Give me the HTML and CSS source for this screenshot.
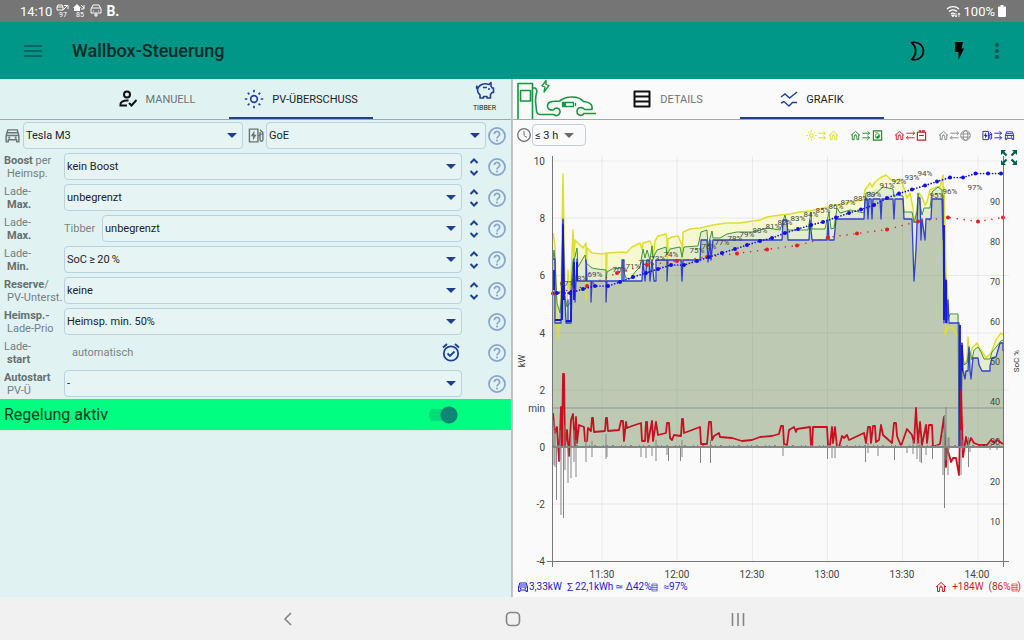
FILE: index.html
```html
<!DOCTYPE html>
<html lang="de">
<head>
<meta charset="utf-8">
<meta name="viewport" content="width=device-width, initial-scale=1">
<title>Wallbox-Steuerung</title>
<link rel="stylesheet" href="styles.css">
</head>
<body>
<svg class="defs" aria-hidden="true">
  <symbol id="house" viewBox="0 0 24 24"><path d="M2 12L12 3l10 9M5 10v11h4v-6a3 3 0 0 1 6 0v6h4V10M9.500 11.500a3 3 0 0 1 5 0" fill="none" stroke="currentColor" stroke-width="2"/></symbol>
  <symbol id="car" viewBox="0 0 24 24"><path d="M3 12l2.500-8h13L21 12M3 12v9h3v-3h12v3h3v-9zM5 8h14" fill="none" stroke="currentColor" stroke-width="2" stroke-linejoin="round"/><circle cx="7.500" cy="15" r="1.500" fill="currentColor"/><circle cx="16.500" cy="15" r="1.500" fill="currentColor"/></symbol>
  <symbol id="pump" viewBox="0 0 24 24"><path d="M2 21V3h12v18zM14 12h3v6a2 2 0 0 0 4 0V8l-4-4M17 7v3h4" fill="none" stroke="currentColor" stroke-width="2"/><path d="M9 5l-5 8h3v6l5-8H9z" fill="currentColor"/></symbol>
  <symbol id="sun" viewBox="0 0 24 24"><circle cx="12" cy="12" r="4" fill="none" stroke="currentColor" stroke-width="2"/><path d="M12 1v3M12 20v3M1 12h3M20 12h3M4.500 4.500l2 2M17.500 17.500l2 2M19.500 4.500l-2 2M6.500 17.500l-2 2" stroke="currentColor" stroke-width="2"/></symbol>
  <symbol id="to" viewBox="0 0 24 24"><path d="M3 7h15M14 3l5 4-5 4M3 17h15M14 13l5 4-5 4" fill="none" stroke="currentColor" stroke-width="2"/></symbol>
  <symbol id="swap" viewBox="0 0 24 24"><path d="M3 7h18M17 3l4 4-4 4M21 17H3M7 13l-4 4 4 4" fill="none" stroke="currentColor" stroke-width="2"/></symbol>
  <symbol id="help" viewBox="0 0 24 24"><g fill="none" stroke="currentColor" stroke-width="2.300"><circle cx="12" cy="12" r="10.700"/><path d="M8.500 9.500a3.500 3.500 0 1 1 5.300 3c-1.300.8-1.800 1.300-1.800 2.700"/></g><circle cx="12" cy="18" r="1.400" fill="currentColor"/></symbol>
  <symbol id="step" viewBox="0 0 10 18"><path d="M1.500 5L5 1.500 8.500 5M1.500 13L5 16.500 8.500 13" fill="none" stroke="currentColor" stroke-width="2"/></symbol>
  <symbol id="cell" viewBox="0 0 8 10"><path d="M1 1h6v8H1zM1 3h6M1 5h6M1 7h6" fill="none" stroke="currentColor" stroke-width=".7"/></symbol>
</svg>

<div class="statusbar">
  <span class="clock">14:10</span>
  <svg width="13" height="14" viewBox="0 0 13 14"><path d="M1 6V3l1-2h4l1 2v3zM1 3h6" fill="none" stroke="currentColor"/><path d="M7 6l4-4M8 1.500h4V5" fill="none" stroke="currentColor"/><text x="3" y="13" class="mini">97</text></svg>
  <svg width="13" height="14" viewBox="0 0 13 14"><path d="M0 4l4-4 4 4H7v3H1V4z" fill="currentColor"/><path d="M8 1l3 3M11 1v4H8" fill="none" stroke="currentColor"/><text x="3" y="13" class="mini">85</text></svg>
  <svg width="12" height="14" viewBox="0 0 12 14"><path d="M1 9V5l2-4h6l2 4v4zM2 4h8M3 7h1M8 7h1M6 9v4M4 11h4" fill="none" stroke="currentColor" stroke-width="1"/></svg>
  <b>B.</b>
  <span class="status-right">
    <svg width="15" height="13" viewBox="0 0 15 13"><path d="M1 4a9 9 0 0 1 12 0M3 6.500a6 6 0 0 1 8 0M5 9a3 3 0 0 1 4 0" fill="none" stroke="currentColor" stroke-width="1.300"/><path d="M7 12l-1.500-2h3zM10 8v4M9 10.500l1 1.500 1-1.500M13 12V8M12 9.500L13 8l1 1.500" fill="currentColor" stroke="currentColor" stroke-width=".7"/></svg>
    100%
    <svg width="8" height="12" viewBox="0 0 8 12"><path d="M2.500 0h3v1.500H7q1 0 1 1V11q0 1-1 1H1q-1 0-1-1V2.500q0-1 1-1h1.500z" fill="currentColor"/></svg>
  </span>
</div>

<header class="appbar">
  <button class="icon-btn menu" aria-label="Menü"><svg width="18" height="12" viewBox="0 0 18 12"><path d="M0 1h18M0 6h18M0 11h18" stroke="currentColor" stroke-width="2"/></svg></button>
  <h1>Wallbox-Steuerung</h1>
  <button class="icon-btn" aria-label="Nachtmodus"><svg width="16" height="20" viewBox="0 0 16 20"><path d="M2.500 1.500C11 0 14.500 6 14.500 10s-3.500 10-12 8.500C8 14 8 6 2.500 1.500z" fill="none" stroke="#000" stroke-width="1.700" stroke-linejoin="round"/></svg></button>
  <button class="icon-btn flash" aria-label="Blitz"><svg width="12" height="20" viewBox="0 0 12 20"><path d="M2 1h8l-1.500 6.500H11L5.500 19v-8H2z" fill="#000"/></svg></button>
  <button class="icon-btn dots" aria-label="Mehr"><svg width="4" height="16" viewBox="0 0 4 16"><circle cx="2" cy="2" r="2"/><circle cx="2" cy="8" r="2"/><circle cx="2" cy="14" r="2"/></svg></button>
</header>

<main class="panes">
  <section class="pane control">
    <div class="tabbar">
      <div class="tabs centered">
        <button class="tab"><svg class="ink" width="18" height="18" viewBox="0 0 18 18"><g fill="none" stroke="currentColor" stroke-width="2"><circle cx="8" cy="4.500" r="3"/><path d="M9.500 10.500H8c-4 0-6.500 2-6.500 3.500V15.500H8M10 13l2.500 2.500 5-5.500"/></g></svg>MANUELL</button>
        <button class="tab active"><svg class="navy" width="20" height="20"><use href="#sun"/></svg>PV-ÜBERSCHUSS</button>
      </div>
      <button class="tibber"><svg class="navy" width="20" height="19" viewBox="0 0 20 19"><path d="M5 4.500c2-1.500 6-2 9-1L16 1.500v3.500l1 2h1.500v4.500H17l-1.500 2v3.500H12V15.500H8.500V17H5v-3c-2-1.500-2.500-3-2.500-5s1-3.500 2.500-4.500zM2.500 8Q1 7 2 4.500" fill="none" stroke="currentColor" stroke-width="1.600" stroke-linejoin="round"/><path d="M8 6.500h4" stroke="currentColor" stroke-width="1.500"/><circle cx="14" cy="8" r="1" fill="currentColor"/></svg>TIBBER</button>
    </div>

    <form class="settings">
      <div class="row">
        <label class="device" for="car-select" aria-label="Fahrzeug"><svg width="17" height="17"><use href="#car"/></svg></label>
        <span class="select"><select id="car-select"><option>Tesla M3</option></select></span>
        <label class="device second" for="box-select" aria-label="Wallbox"><svg width="17" height="17"><use href="#pump"/></svg></label>
        <span class="select"><select id="box-select"><option>GoE</option></select></span>
        <button type="button" class="help" aria-label="Hilfe"><svg width="18" height="18"><use href="#help"/></svg></button>
      </div>
      <div class="row">
        <label class="name" for="boost"><b>Boost</b> per<span>Heimsp.</span></label>
        <span class="select"><select id="boost"><option>kein Boost</option></select></span>
        <button type="button" class="step" aria-label="Boost ändern"><svg width="10" height="18"><use href="#step"/></svg></button>
        <button type="button" class="help" aria-label="Hilfe"><svg width="18" height="18"><use href="#help"/></svg></button>
      </div>
      <div class="row">
        <label class="name" for="max">Lade-<span><b>Max.</b></span></label>
        <span class="select"><select id="max"><option>unbegrenzt</option></select></span>
        <button type="button" class="step" aria-label="Lade-Max. ändern"><svg width="10" height="18"><use href="#step"/></svg></button>
        <button type="button" class="help" aria-label="Hilfe"><svg width="18" height="18"><use href="#help"/></svg></button>
      </div>
      <div class="row">
        <label class="name" for="max-tibber">Lade-<span><b>Max.</b></span></label>
        <label class="prefix" for="max-tibber">Tibber</label>
        <span class="select"><select id="max-tibber"><option>unbegrenzt</option></select></span>
        <button type="button" class="step" aria-label="Tibber-Maximum ändern"><svg width="10" height="18"><use href="#step"/></svg></button>
        <button type="button" class="help" aria-label="Hilfe"><svg width="18" height="18"><use href="#help"/></svg></button>
      </div>
      <div class="row">
        <label class="name" for="min">Lade-<span><b>Min.</b></span></label>
        <span class="select"><select id="min"><option>SoC&thinsp;≥&thinsp;20&thinsp;%</option></select></span>
        <button type="button" class="step" aria-label="Lade-Min. ändern"><svg width="10" height="18"><use href="#step"/></svg></button>
        <button type="button" class="help" aria-label="Hilfe"><svg width="18" height="18"><use href="#help"/></svg></button>
      </div>
      <div class="row">
        <label class="name" for="reserve"><b>Reserve</b>/<span>PV-Unterst.</span></label>
        <span class="select"><select id="reserve"><option>keine</option></select></span>
        <button type="button" class="step" aria-label="Reserve ändern"><svg width="10" height="18"><use href="#step"/></svg></button>
        <button type="button" class="help" aria-label="Hilfe"><svg width="18" height="18"><use href="#help"/></svg></button>
      </div>
      <div class="row">
        <label class="name" for="prio"><b>Heimsp.-</b><span>Lade-Prio</span></label>
        <span class="select"><select id="prio"><option>Heimsp. min. 50%</option></select></span>
        <span class="step"></span>
        <button type="button" class="help" aria-label="Hilfe"><svg width="18" height="18"><use href="#help"/></svg></button>
      </div>
      <div class="row">
        <span class="name">Lade-<span><b>start</b></span></span>
        <span class="auto">automatisch</span>
        <button type="button" class="alarm" aria-label="Ladestart planen"><svg class="navy" width="18" height="19" viewBox="0 0 18 19"><g fill="none" stroke="currentColor" stroke-width="1.800"><circle cx="9" cy="10.500" r="7.200"/><path d="M1 4.500L5 1M17 4.500L13 1M5.500 10.500l2.500 2.500 4.500-4.500"/></g></svg></button>
        <span class="step"></span>
        <button type="button" class="help" aria-label="Hilfe"><svg width="18" height="18"><use href="#help"/></svg></button>
      </div>
      <div class="row">
        <label class="name" for="autostart"><b>Autostart</b><span>PV-Ü</span></label>
        <span class="select"><select id="autostart"><option>-</option></select></span>
        <span class="step"></span>
        <button type="button" class="help" aria-label="Hilfe"><svg width="18" height="18"><use href="#help"/></svg></button>
      </div>
      <div class="active-bar">
        <label for="regelung">Regelung aktiv</label>
        <input id="regelung" class="switch" type="checkbox" checked>
      </div>
    </form>
  </section>

  <section class="pane monitor">
    <div class="tabbar">
      <svg class="brand" width="83" height="40" viewBox="513 79 83 40"><g fill="none" stroke="#16963f" stroke-width="1.600" stroke-linejoin="round" stroke-linecap="round"><path d="M518 118.500V83.500h14.500v35M520.500 90.500h10v10.500h-10zM533 88h2.500l1.500 3-1 4-.5 6 1 10q.5 3.500 4 3.500H554q1 1.500 3 1 3-1 3-4t-3.500-3.500q-2 0-3 2-6 .5-6-4 0-4 5-4.500l7-.5q6-4 11-4 9-.5 13 4.500 8 1 8.500 5v3h-7.500q-1-2-4-2-3.500.5-3.500 4t4 4q2-.5 3-2H596"/><path d="M546 80.500l-4 5.500 3 1-1 5 5-6.500-3-1z" stroke-width="1.300"/><path d="M562.500 102.500h11v4h-11zM575.500 103.500v2" stroke-width="1.300"/></g><path d="M562 102h4v5h-4z" fill="#16963f"/></svg>
      <div class="tabs">
        <button class="tab"><svg class="ink" width="18" height="18" viewBox="0 0 18 18"><path d="M1.500 1.500h15v15h-15zM1.500 6.500h15M1.500 11.500h15" fill="none" stroke="currentColor" stroke-width="2" stroke-linejoin="round"/></svg>DETAILS</button>
        <button class="tab active"><svg class="navy" width="18" height="18" viewBox="0 0 18 18"><path d="M1 7l4-3 4.500 4L17 2M1 13l3-1.500 5 4.500 3.500-3.500H17" fill="none" stroke="currentColor" stroke-width="1.400"/></svg>GRAFIK</button>
      </div>
    </div>

    <div class="toolbar">
      <label class="range-label" for="range" aria-label="Zeitraum"><svg width="14" height="14" viewBox="0 0 14 14"><path d="M7 3v4.500l3 2" fill="none" stroke="currentColor"/><circle cx="7" cy="7" r="6.300" fill="none" stroke="currentColor" stroke-width="1.300"/></svg></label>
      <span class="select range"><select id="range"><option>≤ 3 h</option></select></span>
      <div class="legend">
        <span class="lg yellow"><svg><use href="#sun"/></svg><svg><use href="#to"/></svg><svg><use href="#house"/></svg></span>
        <span class="lg green"><svg><use href="#house"/></svg><svg><use href="#to"/></svg><svg viewBox="0 0 24 24"><path d="M3 2h18v20H3z" fill="none" stroke="currentColor" stroke-width="2.500"/><circle cx="12" cy="13" r="5" fill="none" stroke="currentColor" stroke-width="1.500"/><path d="M8 16l8-6v6l-4 3z" fill="currentColor"/><path d="M6 5.500h7" stroke="currentColor"/></svg></span>
        <span class="lg red"><svg><use href="#house"/></svg><svg><use href="#swap"/></svg><svg viewBox="0 0 24 24"><path d="M3 5h18v17H3zM6 2h4v3M14 5V2h4v3M7 12h10" fill="none" stroke="currentColor" stroke-width="2.500"/></svg></span>
        <span class="lg gray"><svg><use href="#house"/></svg><svg><use href="#swap"/></svg><svg viewBox="0 0 24 24"><g fill="none" stroke="currentColor" stroke-width="2"><circle cx="12" cy="12" r="10.500"/><ellipse cx="12" cy="12" rx="5" ry="10.500"/><path d="M2 8.500h20M2 15.500h20"/></g></svg></span>
        <span class="lg blue"><svg><use href="#pump"/></svg><svg><use href="#to"/></svg><svg><use href="#car"/></svg></span>
      </div>
      <button class="fullscreen" aria-label="Vollbild"><svg width="18" height="17" viewBox="0 0 18 17"><path d="M1 6V1h5L4.300 2.700l3 3-1.600 1.600-3-3zM17 6V1h-5l1.700 1.700-3 3 1.600 1.600 3-3zM1 11v5h5l-1.700-1.700 3-3-1.600-1.600-3 3zM17 11v5h-5l1.700-1.700-3-3 1.600-1.600 3 3z" fill="#00604f"/></svg></button>
    </div>

    <svg class="chart" viewBox="513 150 511 430" role="img" aria-label="Leistung und Ladezustand">
      <path class="fill-pv" d="M553 447V233L555 245 556 290 558 335 561 293 563 174 565 300 567 306 570 290 573 230 575 240 578 243 583 248 586 243 592 253 606 253 623 252 626 253 632 247 640 243 650 241 652 245 658 236 666 234 667 240 672 237 678 236 682 245 683 232 690 229 700 228 713 225 727 223 740 223 753 221 767 217 780 215 800 212 828 207 837 205 850 202 863 200 865 190 870 183 872 187 875 182 880 178 886 175 890 179 895 181 900 179 903 185 907 198 910 193 914 222 917 210 919 193 925 205 930 190 940 187 943 175 944 187 946 323 959 335V447H962V343L963 365 967 360 968 337 970 360 972 348 977 343 981 350 986 358 991 353 996 340 1001 333 1003 335V447z"/>
      <path class="fill-house" d="M553 447V260L555 260 557 303 560 313 563 220 564 293 567 307 570 303 573 260 577 248 578 267 585 255 586 263 592 268 606 270 622 268 626 278 630 279 635 272 640 267 643 249 645 258 647 250 650 260 652 246 653 258 657 250 666 247 680 247 682 257 684 247 698 246 701 232 707 230 708 247 712 231 713 238 720 238 727 234 753 232 767 228 780 230 785 215 788 230 808 230 811 212 812 229 825 229 829 212 831 229 837 208 840 213 850 210 864 213 866 193 883 187 893 189 897 195 903 196 904 212 912 212 914 223 918 193 922 215 924 208 930 208 932 192 938 187 942 190 946 314 959 315V447H962V343L964 365 967 363 969 348 972 360 974 350 978 347 984 359 990 359 992 352 1003 340V447z"/>
      <path class="fill-car" d="M553 447V259H555V323H561L563 219 564 280 566 323H571L574 259 575 302 577 259V281H591V302L592 281H622V260H624V281H642L643 260 645 281 647 260H649L650 281 652 260 654 281H656V260H667V281L668 260H681L682 281 683 260H700L701 240H707L708 262 710 240H782L783 220H787L788 240H809L810 220 812 240H827L828 220 829 240H834L836 219H864L865 199H893L894 219 895 199H903L904 219H912L914 281 918 198H920L921 240 922 219 925 240 926 219H931L932 199H942L944 323H959V447H962V371H968L969 347 970 371 973 358H978L982 371H990L992 358 996 357 1000 343H1003V447z"/>

      <path class="grid" d="M553 161h456M553 218h456M553 275.500h456M553 333h456M553 390h456M553 504h456M602 156v405M677 156v405M752.500 156v405M827.500 156v405M902.500 156v405M978 156v405"/>
      <path class="minline" d="M553 408h450"/>

      <path class="line pv" d="M553 233L555 245 556 290 558 338 561 293 563 174 565 300 567 306 568 270 570 300 573 230 574 260 575 240 578 243 583 248 586 243 586 300 587 248 592 253 603 254 606 253 606 300 607 253 623 252 626 253 632 247 640 243 642 249 643 243 650 241 652 245 653 260 655 241 658 236 666 234 667 240 667 278 668 239 672 237 678 236 682 245 682 275 683 232 690 229 700 228 713 225 727 223 740 223 753 221 760 220 767 217 780 215 790 214 800 212 810 211 828 207 833 205 837 205 850 202 863 200 865 190 870 183 872 187 875 182 880 178 886 175 890 179 895 181 900 179 903 185 907 198 910 193 913 208 914 222 917 210 919 193 922 197 925 205 927 202 930 190 937 187 940 187 943 175 943 250 944 187 946 273 948 300 945 335 947 328 952 327 957 335 960 343 961 395 963 365 967 360 968 337 970 360 972 348 977 343 981 350 986 358 991 353 996 340 1001 333 1003 335"/>
      <path class="line home" d="M553 260L554 250 555 260 557 303 560 313 562 293 563 220 564 293 567 307 570 303 573 260 575 257 577 248 578 267 585 255 586 263 592 268 597 269 606 270 606 280 607 272 612 269 622 268 623 260 624 272 626 278 630 279 635 272 640 267 643 249 645 258 647 250 650 260 652 246 653 258 657 250 666 247 667 255 670 249 680 247 682 257 684 247 698 246 701 232 707 230 708 247 709 242 712 231 713 238 720 238 727 234 737 232 753 232 767 228 780 230 785 215 788 230 808 230 811 212 812 229 825 229 829 212 831 229 834 228 837 208 840 213 850 210 864 213 866 193 870 192 872 197 883 187 893 189 894 197 897 195 903 196 904 212 912 212 914 223 917 212 918 193 922 215 924 208 930 208 932 192 938 187 942 190 943 217 945 273 948 320 950 314 958 314 959 447 961 447 962 343 964 365 967 363 969 348 972 360 974 350 978 347 981 352 984 359 990 359 992 352 997 346 1001 341 1003 340"/>
      <path class="line car" d="M553 259H555V323H561L563 219 564 280 566 323H568V300V323H571L572 290 574 259 575 302 576 281 577 259V281H586V260L587 281H591V302L592 281H606V302L607 281H622V260H624V281H642L643 260 645 281 647 260H649L650 281 652 260 654 281H656V260H667V281L668 260H681L682 281 683 260H700L701 240H707L708 262 710 240 711 260 713 240H782L783 220H787L788 240H809L810 220 812 240H827L828 220 829 240H834L836 219H864L865 199H867L868 219 869 199H871L872 219 873 199H880L881 219 882 199H893L894 219 895 199H903L904 219H912L914 281 916 250 918 198H920L921 240 922 219 925 240 926 219H931L932 199H942L943 240V199L944 323 946 280 947 323 948 300 949 323H959V447H961L962 343 963 371 965 379 966 371H968L969 347 970 371 971 379 973 358H978L979 365 982 371H990V366L992 358 996 357 998 350 1000 343H1003V351"/>
      <path class="line deep" d="M555 320H561M554 270V290M562 320L563 225 564 300M566 321H571V290M574 262V300M577 262V281M944 225V320M946 280V323M960 325V447M962 345V371"/>

      <g class="pct">
        <text x="567" y="283">67%</text><text x="580" y="278">68%</text><text x="595" y="274">69%</text><text x="620" y="269">70%</text><text x="633" y="266">71%</text><text x="646" y="262">72%</text><text x="658" y="258">73%</text><text x="671" y="254">74%</text><text x="697" y="250">75%</text><text x="709" y="246">76%</text><text x="722" y="242">77%</text><text x="735" y="238">78%</text><text x="747" y="234">79%</text><text x="760" y="230">80%</text><text x="773" y="226">81%</text><text x="785" y="222">82%</text><text x="798" y="218">83%</text><text x="811" y="214">84%</text><text x="823" y="210">85%</text><text x="836" y="206">86%</text><text x="848" y="202">87%</text><text x="861" y="198">88%</text><text x="874" y="194">89%</text><text x="887" y="185">91%</text><text x="899" y="181">92%</text><text x="912" y="177">93%</text><text x="925" y="173">94%</text><text x="937" y="195">95%</text><text x="950" y="191">96%</text><text x="975" y="187">97%</text>
      </g>

      <path class="soc-home" d="M553 293.500L587 286 617 273 647 265 677 261 707 257 737 253.500 767 249.500 797 245.500 828 237.500 857 233.500 887 229.500 918 221.500 948 217.500 978 221.500 1003 217.500"/>
      <path class="soc-home big" d="M553 293.500h0M587 286h0M617 273h0M647 265h0M677 261h0M707 257h0M737 253.500h0M767 249.500h0M797 245.500h0M828 237.500h0M857 233.500h0M887 229.500h0M918 221.500h0M948 217.500h0M978 221.500h0M1003 217.500h0"/>
      <path class="soc-car" d="M553 293L570 293 583 289 595 286 608 286 620 282 633 277 646 273 658 269 671 265 684 265 697 261 709 257 722 253 735 249 747 245 760 241 772 238 785 233 798 229 811 225 823 222 836 217.500 849 213 861 209.500 874 205 887 198 899 193.500 912 189.500 925 185.500 937 181.500 950 177.500 963 177.500 975.500 173.500 1003 173.500"/>
      <path class="soc-car big" d="M557 293h0M570 293h0M583 289h0M595 286h0M608 286h0M620 282h0M633 277h0M646 273h0M658 269h0M671 265h0M684 265h0M697 261h0M709 257h0M722 253h0M735 249h0M747 245h0M760 241h0M772 238h0M785 233h0M798 229h0M811 225h0M823 222h0M836 217.500h0M849 213h0M861 209.500h0M874 205h0M887 198h0M899 193.500h0M912 189.500h0M925 185.500h0M937 181.500h0M950 177.500h0M963 177.500h0M975.500 173.500h0M988 173.500h0M1001 173.500h0"/>

      <path class="line battery" d="M553 413L555 433 557 427 559 461 561 407 562 447 563 374 564 374 565 447 567 430 569 456 571 420 573 414 575 446 576 417 577 443 579 425 584 427 585 441 587 441 588 428 591 431 592 418 593 418 594 432 605 431 606 418 607 418 608 431 619 430 621 421 623 421 624 441 626 422 627 428 632 426 641 423 642 441 645 441 646 422 647 422 648 442 652 421 653 441 656 422 658 435 666 433 667 423 669 423 670 438 672 440 674 435 681 436 682 419 683 419 684 433 700 427 701 444 707 444 709 422 711 422 712 440 714 436 719 433 720 437 732 438 742 441 752 440 760 437 772 436 779 434 781 426 783 426 784 444 787 445 789 430 794 427 796 432 797 429 810 427 811 446 812 446 813 427 827 427 828 445 830 445 832 427 833 443 835 427 837 447 839 447 842 436 844 438 847 435 849 440 864 433 866 443 868 427 870 427 871 443 873 426 875 426 876 442 879 440 881 425 883 435 892 443 894 423 896 423 897 436 901 446 907 429 912 435 914 443 916 408 918 443 920 422 922 445 926 425 927 443 929 425 932 425 933 447 940 444 944 417 946 467 947 447 951 462 953 458 956 458 959 475 961 390 963 457 966 437 968 446 971 438 974 443 979 445 987 445 991 440 994 443 997 440 1003 444"/>
      <path class="grid-base" d="M553 447H1003"/>
      <path class="grid-noise" d="M553 446.500H1003"/>
      <path class="grid-power" d="M554 420V465M555 430V467M556.500 447V500M560 430V460M561 447V515M563.500 420V518M565 425V470M568 447V483M571 435V478M574 430V462M576 440V477M586 436V462M592 441V457M606 434V459M607 445V457M641 447V457M646 447V458M652 447V456M656 440V461M667 447V455M668.500 447V461M680.500 447V461M682 440V457M700.500 447V463M710.500 440V463M783 447V456M827.500 447V459M832 447V458M835 447V458M865.500 447V462M868 443V453M878 447V456M894.500 447V460M907 447V453M913 440V454M917 440V459M920 440V462M921.500 447V463M926 447V455M932.500 447V459M943 435V475M944.500 415V508M946 407V460M948 438V475M949 437V450M961 430V475M963 440V450M968.500 437V467M970 447V452M990 445V450M997 445V450"/>

      <path class="axis" d="M552.500 156V567M547 561.500H1009M1003.500 156V567"/>
      <g class="lab end">
        <text x="545" y="165">10</text><text x="545" y="222">8</text><text x="545" y="279">6</text><text x="545" y="337">4</text><text x="545" y="394">2</text><text x="545" y="412">min</text><text x="545" y="451">0</text><text x="545" y="508">-2</text><text x="545" y="565">-4</text>
      </g>
      <g class="lab mid">
        <text x="602" y="578">11:30</text><text x="677" y="578">12:00</text><text x="752" y="578">12:30</text><text x="827" y="578">13:00</text><text x="902" y="578">13:30</text><text x="977" y="578">14:00</text>
      </g>
      <g class="lab soc end">
        <text x="1000" y="205">90</text><text x="1000" y="245">80</text><text x="1000" y="285">70</text><text x="1000" y="325">60</text><text x="1000" y="365">50</text><text x="1000" y="405">40</text><text x="1000" y="445">30</text><text x="1000" y="485">20</text><text x="1000" y="525">10</text>
      </g>
      <text class="unit" transform="translate(525 361) rotate(-90)">kW</text>
      <text class="unit small" transform="translate(1019 361) rotate(-90)">SoC %</text>
    </svg>

    <div class="summary">
      <span class="sum blue"><svg width="12" height="12"><use href="#car"/></svg>3,33kW&nbsp; ∑ 22,1kWh&thinsp;≃ Δ42%<svg width="7" height="9"><use href="#cell"/></svg>&nbsp; ≈97%</span>
      <span class="sum red"><svg width="12" height="12"><use href="#house"/></svg>&nbsp; +184W&nbsp; (86%<svg width="7" height="9"><use href="#cell"/></svg>)</span>
    </div>
  </section>
</main>

<nav class="navbar">
  <button aria-label="Zurück"><svg width="18" height="18" viewBox="0 0 18 18"><path d="M12 3L6 9l6 6" fill="none" stroke="currentColor" stroke-width="1.600"/></svg></button>
  <button aria-label="Start"><svg width="18" height="18" viewBox="0 0 18 18"><rect x="2.500" y="2.500" width="13" height="13" rx="4" fill="none" stroke="currentColor" stroke-width="1.600"/></svg></button>
  <button aria-label="Letzte Apps"><svg width="18" height="18" viewBox="0 0 18 18"><path d="M3.500 3v13M9 3v13M14.500 3v13" stroke="currentColor" stroke-width="1.600"/></svg></button>
</nav>
</body>
</html>
```

FILE: styles.css
```css
* { box-sizing: border-box; }

body {
  margin: 0;
  min-height: 100vh;
  display: flex;
  flex-direction: column;
  font-family: Roboto, "Liberation Sans", sans-serif;
  font-size: 11px;
  color: #202526;
  background: #f1f1f1;
}

button {
  border: 0;
  padding: 0;
  background: none;
  font: inherit;
  color: inherit;
  display: flex;
  align-items: center;
  justify-content: center;
}

svg { display: block; flex: none; }
.defs { position: absolute; width: 0; height: 0; }
.navy { color: #204090; }
.ink { color: #111; }

/* System bars */
.statusbar {
  height: 22px;
  padding: 0 18px 0 20px;
  display: flex;
  align-items: center;
  gap: 4px;
  background: #757575;
  color: #fff;
  font-size: 13px;
}
.statusbar b { font-size: 14px; }
.mini { font-size: 7px; fill: #fff; }
.status-right { margin-left: auto; display: flex; align-items: center; gap: 3px; }

.navbar {
  height: 43px;
  padding-left: 2px;
  display: grid;
  grid-template-columns: repeat(3, 225px);
  justify-content: center;
  color: #858585;
}

.appbar {
  height: 57px;
  padding: 0 9px 0 15px;
  display: flex;
  align-items: center;
  background: #009688;
}
.appbar h1 {
  flex: 1;
  margin: 0 0 0 21px;
  font-size: 18px;
  font-weight: 500;
  color: #0a2b28;
}
.icon-btn { width: 36px; height: 40px; margin-left: 4px; }
.menu { margin-left: 0; color: #08675e; }
.flash { margin-left: 6px; }
.dots { margin-left: 2px; fill: #08564f; }

/* Panes */
.panes { flex: 1; display: flex; }
.pane { flex: 1 1 0; min-width: 0; }
.control { background: #e0f2f2; border-right: 1px solid #b9c2c2; }
.monitor {
  display: flex;
  flex-direction: column;
  background: #fafafa;
  border-left: 1px solid #c4c4c4;
}

.tabbar {
  height: 41px;
  display: flex;
  border-bottom: 1px solid #9fa9a9;
}
.tabs { display: flex; flex: 1; }
.centered { justify-content: center; }
.tab {
  width: 144px;
  gap: 9px;
  color: #6c7575;
  border-top: 2px solid transparent;
  border-bottom: 2px solid transparent;
}
.tab.active {
  gap: 8px;
  color: #202526;
  border-bottom-color: #204090;
}
.tibber {
  width: 53px;
  padding-bottom: 5px;
  flex-direction: column;
  gap: 4px;
  font-size: 7px;
  line-height: 8px;
}

/* Settings */
.row {
  height: 31px;
  padding: 0 3px 0 4px;
  display: flex;
  align-items: center;
}
.name {
  width: 60px;
  flex: none;
  font-size: 11px;
  line-height: 13px;
  color: #76807f;
  white-space: nowrap;
}
.name b { color: #66706f; }
.name span { display: block; padding-left: 3px; }
.prefix { width: 38px; color: #7a8483; }
.device { width: 19px; color: #6b7373; }
.device.second { width: 23px; padding-left: 5px; }

.select { position: relative; flex: 1; min-width: 0; }
.select select {
  display: block;
  width: 100%;
  height: 27px;
  padding: 0 20px 0 2px;
  appearance: none;
  border: 1px solid #b9d2dd;
  border-radius: 4px;
  background: #e6f4f4;
  font: inherit;
  color: #202526;
}
.select::after {
  content: "";
  position: absolute;
  top: 11px;
  right: 6px;
  border: 5px solid transparent;
  border-top-color: #204090;
  border-bottom: 0;
  pointer-events: none;
}
.step { width: 24px; height: 27px; color: #204090; }
.help { width: 22px; height: 27px; color: #8ba4cb; }
.auto { flex: 1; padding-left: 8px; color: #7a8483; }
.alarm { width: 22px; height: 27px; }

.active-bar {
  height: 31px;
  padding: 0 53px 0 4px;
  display: flex;
  align-items: center;
  justify-content: space-between;
  background: #00ff80;
  font-size: 16px;
  color: #0b3a20;
}
.switch {
  appearance: none;
  width: 29px;
  height: 18px;
  margin: 0;
  border-radius: 9px;
  background:
    radial-gradient(circle at 20px 9px, #0d8577 8px, transparent 9px),
    linear-gradient(#00dc78, #00dc78) 0 3px / 26px 12px no-repeat;
}

/* Chart pane */
.toolbar {
  position: relative;
  height: 30px;
  padding: 0 9px 0 4px;
  display: flex;
  align-items: center;
}
.range-label { width: 15px; color: #707070; }
.range { flex: none; width: 54px; }
.range select { height: 22px; background: #fafafa; border-color: #c5cddd; }
.range::after { top: 9px; right: 12px; border-top-color: #6b6b6b; }
.legend { margin-left: auto; display: flex; gap: 11px; }
.lg { display: flex; }
.lg svg { width: 11px; height: 11px; }
.yellow { color: #dddd22; }
.green { color: #1c8a2c; }
.red { color: #c81e2a; }
.gray { color: #858585; }
.blue { color: #2222c8; }
.fullscreen { position: absolute; right: 6px; bottom: -16px; }

.chart { width: 100%; height: auto; }
.fill-pv { fill: #f6f9ce; }
.fill-house { fill: #e3edcb; }
.fill-car { fill: #bdc9b3; }
.grid { fill: none; stroke: #808080; stroke-opacity: .13; }
.minline { stroke: #8797a0; }
.axis { fill: none; stroke: #777; }
.line { fill: none; stroke-linejoin: round; }
.pv { stroke: #dede30; stroke-width: 1.5; }
.home { stroke: #3f9440; stroke-width: 1; }
.car { stroke: #3040d4; stroke-width: 1.3; }
.deep { stroke: #1515d8; stroke-width: 1.8; }
.battery { stroke: #c91020; stroke-width: 1.8; }
.grid-base { stroke: #858585; stroke-width: 2; }
.grid-noise { stroke: #858585; stroke-width: 3; stroke-dasharray: 1 4 2 7 1 3; }
.grid-power { fill: none; stroke: #858585; stroke-width: 1; }
.soc-home, .soc-car { fill: none; stroke-linecap: round; }
.soc-home { stroke: #e02020; stroke-width: 1.6; stroke-dasharray: 0 7; }
.soc-car { stroke: #1111dd; stroke-width: 1.7; stroke-dasharray: 0 3; }
.soc-home.big, .soc-car.big { stroke-width: 4; stroke-dasharray: none; }
.pct { font-size: 8px; fill: #444; text-anchor: middle; }
.lab { font-size: 10px; fill: #444; }
.soc { font-size: 9px; }
.end { text-anchor: end; }
.mid { text-anchor: middle; }
.pct text { dominant-baseline: central; }
.unit { font-size: 9px; fill: #333; text-anchor: middle; }
.small { font-size: 8px; }

.summary {
  padding: 0 3px 0 4px;
  display: flex;
  justify-content: space-between;
  font-size: 10px;
  line-height: 14px;
}
.sum { display: flex; align-items: center; white-space: pre; }
```
